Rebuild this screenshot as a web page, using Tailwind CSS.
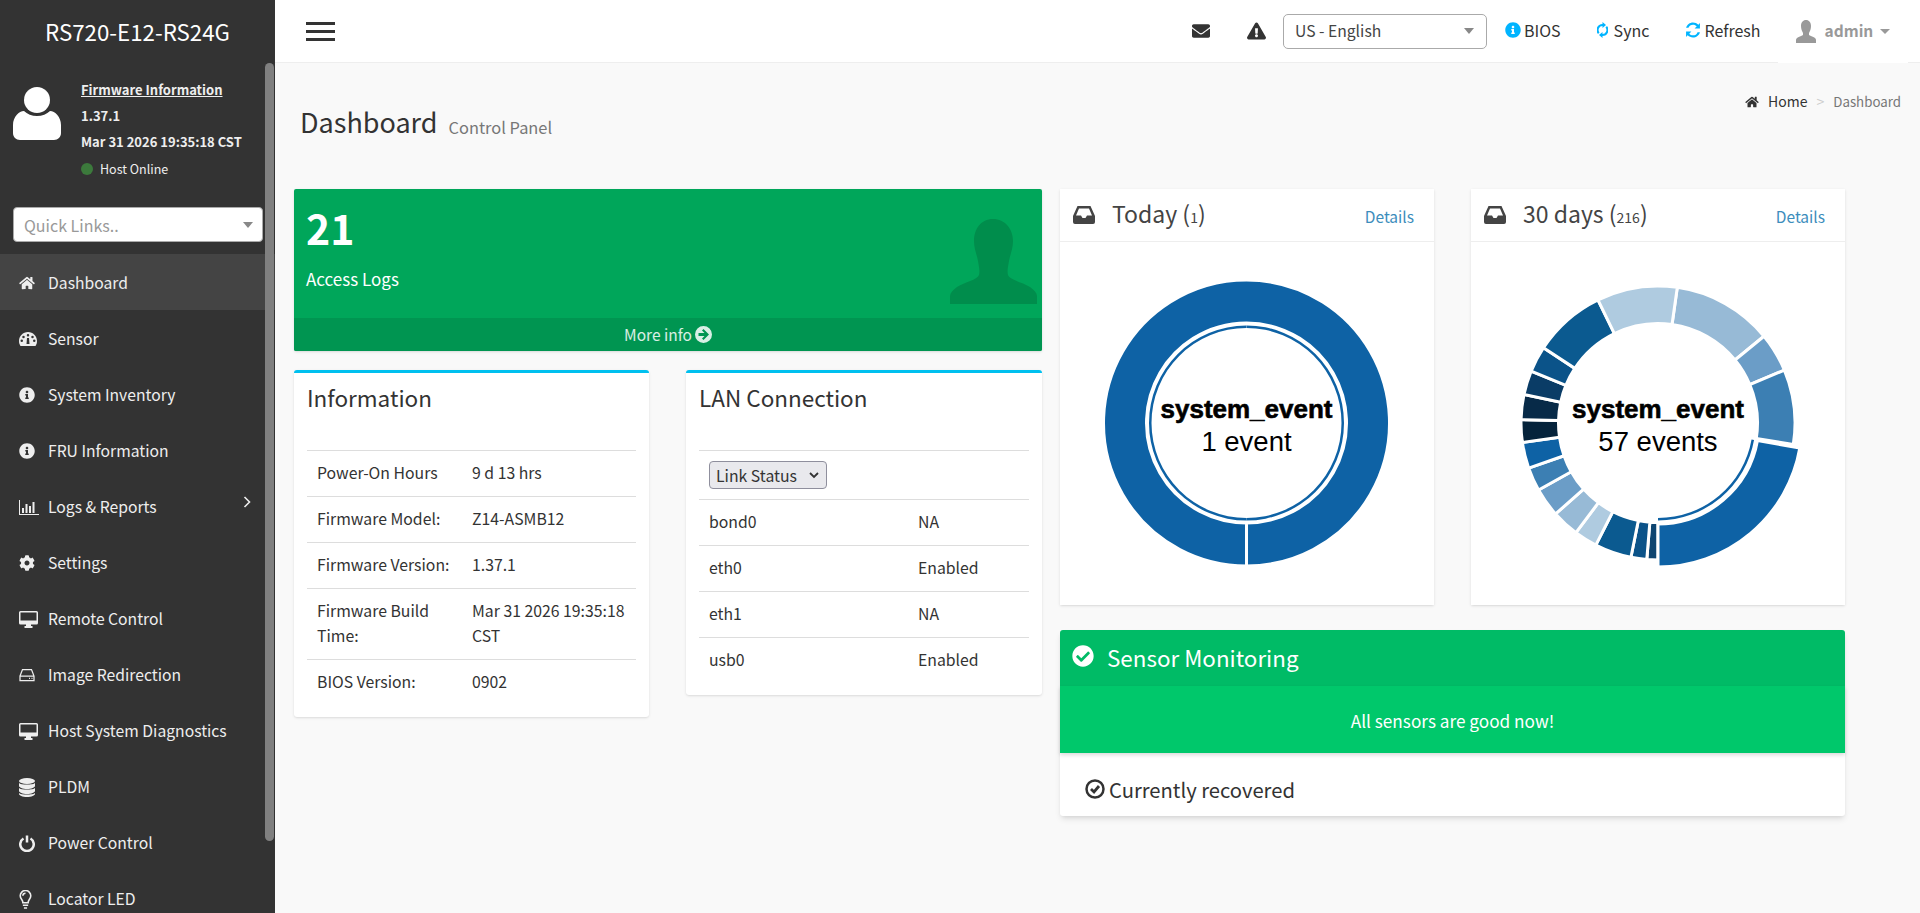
<!DOCTYPE html>
<html lang="en">
<head>
<meta charset="UTF-8">
<title>Dashboard</title>
<script src="https://cdn.jsdelivr.net/npm/@tailwindcss/browser@4"></script>
</head>
<body class="bg-[#f9f9f9] font-['Noto_Sans_CJK_SC','Noto_Sans',sans-serif] text-[#333] overflow-hidden">
<div class="flex h-[913px] w-[1920px] overflow-hidden">

  <!-- sidebar -->
  <aside class="relative w-[275px] shrink-0 bg-[#333] text-[#eee] overflow-hidden">
    <div class="h-[62px] flex items-center justify-center text-[22.300px] leading-[28px] text-white">RS720-E12-RS24G</div>
    <div class="flex h-[145px] pl-[13px] pt-[16px]">
      <svg class="w-[48px] h-[53px] mt-[9px] fill-white" viewBox="0 0 48 53"><circle cx="24" cy="13" r="13"/><path d="M0 38c0-8 6-14 11-14 3 3 8 5 13 5s10-2 13-5c5 0 11 6 11 14v8c0 4-3 7-7 7H7c-4 0-7-3-7-7z"/></svg>
      <div class="ml-[20px] text-[13px] leading-[26px] font-bold -mt-[1px]">
        <a class="underline block">Firmware Information</a>
        <p>1.37.1</p>
        <p>Mar 31 2026 19:35:18 CST</p>
        <p class="flex items-center font-normal text-[12.500px] mt-[1px]"><span class="w-[12px] h-[12px] rounded-full bg-[#3c7a3c] mr-[7px]"></span>Host Online</p>
      </div>
    </div>
    <div class="mx-[13px] w-[250px] h-[35px] bg-white rounded-[4px] border border-[#aaa] flex items-center justify-between pl-[10px] pr-[9px] text-[16px] text-[#999]">
      Quick Links..
      <span class="w-0 h-0 border-x-[5px] border-x-transparent border-t-[6px] border-t-[#888]"></span>
    </div>
    <nav class="mt-[12px] text-[15.700px] [&>a]:pt-[2px]">
      <a class="flex items-center h-[56px] bg-[#444] pl-[19px]"><svg class="w-[16px] h-[14px] fill-[#eee] mr-[13px]" viewBox="0 0 576 512"><path d="M280.37 148.26L96 300.11V464a16 16 0 0 0 16 16l112.06-.29a16 16 0 0 0 15.92-16V368a16 16 0 0 1 16-16h64a16 16 0 0 1 16 16v95.64a16 16 0 0 0 16 16.05L464 480a16 16 0 0 0 16-16V300L295.67 148.26a12.19 12.19 0 0 0-15.3 0zM571.6 251.47L488 182.56V44.05a12 12 0 0 0-12-12h-56a12 12 0 0 0-12 12v72.61L318.47 43a48 48 0 0 0-61 0L4.34 251.47a12 12 0 0 0-1.6 16.9l25.5 31A12 12 0 0 0 45.15 301l235.22-193.74a12.19 12.19 0 0 1 15.3 0L530.9 301a12 12 0 0 0 16.9-1.6l25.5-31a12 12 0 0 0-1.7-16.93z"/></svg>Dashboard</a>
      <a class="flex items-center h-[56px] pl-[19px]"><svg class="w-[18px] h-[14px] fill-[#eee] mr-[11px]" viewBox="0 0 36 28"><path d="M18 0C8 0 0 8 0 18c0 4 1 7 3 10h30c2-3 3-6 3-10C36 8 28 0 18 0zm0 4a2.5 2.5 0 1 1 0 5 2.5 2.5 0 0 1 0-5zM9 7.5a2.5 2.5 0 1 1 0 5 2.5 2.5 0 0 1 0-5zm18 0a2.5 2.5 0 1 1 0 5 2.5 2.5 0 0 1 0-5zM5.500 15a2.500 2.500 0 1 1 0 5 2.500 2.500 0 0 1 0-5zm25 0a2.500 2.500 0 1 1 0 5 2.500 2.500 0 0 1 0-5zM16 12h4l1 12h-6z" fill-rule="evenodd"/></svg>Sensor</a>
      <a class="flex items-center h-[56px] pl-[19px]"><svg class="w-[16px] h-[16px] fill-[#eee] mr-[13px]" viewBox="0 0 512 512"><path d="M256 8C119.043 8 8 119.083 8 256c0 136.997 111.043 248 248 248s248-111.003 248-248C504 119.083 392.957 8 256 8zm0 110c23.196 0 42 18.804 42 42s-18.804 42-42 42-42-18.804-42-42 18.804-42 42-42zm56 254c0 6.627-5.373 12-12 12h-88c-6.627 0-12-5.373-12-12v-24c0-6.627 5.373-12 12-12h12v-64h-12c-6.627 0-12-5.373-12-12v-24c0-6.627 5.373-12 12-12h64c6.627 0 12 5.373 12 12v100h12c6.627 0 12 5.373 12 12v24z"/></svg>System Inventory</a>
      <a class="flex items-center h-[56px] pl-[19px]"><svg class="w-[16px] h-[16px] fill-[#eee] mr-[13px]" viewBox="0 0 512 512"><path d="M256 8C119.043 8 8 119.083 8 256c0 136.997 111.043 248 248 248s248-111.003 248-248C504 119.083 392.957 8 256 8zm0 110c23.196 0 42 18.804 42 42s-18.804 42-42 42-42-18.804-42-42 18.804-42 42-42zm56 254c0 6.627-5.373 12-12 12h-88c-6.627 0-12-5.373-12-12v-24c0-6.627 5.373-12 12-12h12v-64h-12c-6.627 0-12-5.373-12-12v-24c0-6.627 5.373-12 12-12h64c6.627 0 12 5.373 12 12v100h12c6.627 0 12 5.373 12 12v24z"/></svg>FRU Information</a>
      <a class="flex items-center h-[56px] pl-[19px] relative"><svg class="w-[20px] h-[15px] fill-[#eee] mr-[9px]" viewBox="0 0 40 30"><path d="M0 0h2v28h38v2H0zM6 16h4v10H6zM13 8h4v18h-4zM20 12h4v14h-4zM27 4h4v22h-4z"/></svg>Logs &amp; Reports<svg class="absolute right-[24px] top-[18px] w-[8px] h-[12px] stroke-[#eee] fill-none stroke-[1.6]" viewBox="0 0 8 12"><path d="M1.500 1l5 5-5 5"/></svg></a>
      <a class="flex items-center h-[56px] pl-[19px]"><svg class="w-[16px] h-[16px] fill-[#eee] mr-[13px]" viewBox="0 0 512 512"><path d="M487.4 315.7l-42.6-24.6c4.3-23.2 4.3-47 0-70.2l42.6-24.6c4.9-2.8 7.1-8.6 5.5-14-11.1-35.6-30-67.8-54.7-94.6-3.8-4.1-10-5.1-14.8-2.3L380.8 110c-17.9-15.4-38.5-27.3-60.8-35.1V25.8c0-5.6-3.9-10.5-9.4-11.7-36.7-8.2-74.3-7.8-109.2 0-5.5 1.2-9.4 6.1-9.4 11.7V75c-22.2 7.9-42.8 19.8-60.8 35.1L88.7 85.500c-4.9-2.8-11-1.9-14.8 2.3-24.7 26.7-43.6 58.9-54.7 94.6-1.7 5.4.6 11.2 5.5 14L67.3 221c-4.3 23.2-4.3 47 0 70.2l-42.6 24.6c-4.9 2.8-7.1 8.6-5.5 14 11.1 35.6 30 67.8 54.7 94.6 3.8 4.1 10 5.1 14.8 2.3l42.6-24.6c17.9 15.4 38.5 27.3 60.8 35.1v49.2c0 5.6 3.9 10.5 9.4 11.7 36.7 8.2 74.3 7.8 109.2 0 5.5-1.2 9.4-6.1 9.4-11.7v-49.2c22.2-7.9 42.8-19.8 60.8-35.1l42.6 24.6c4.9 2.8 11 1.9 14.8-2.3 24.7-26.7 43.6-58.9 54.7-94.6 1.5-5.5-.7-11.3-5.6-14.1zM256 336c-44.1 0-80-35.9-80-80s35.9-80 80-80 80 35.9 80 80-35.9 80-80 80z"/></svg>Settings</a>
      <a class="flex items-center h-[56px] pl-[19px]"><svg class="w-[19px] h-[17px] fill-[#eee] mr-[10px]" viewBox="0 0 38 34"><path fill-rule="evenodd" d="M3 0h32a3 3 0 0 1 3 3v21a3 3 0 0 1-3 3H24v3h3v4H11v-4h3v-3H3a3 3 0 0 1-3-3V3a3 3 0 0 1 3-3zM3 3v16h32V3z"/></svg>Remote Control</a>
      <a class="flex items-center h-[56px] pl-[19px]"><svg class="w-[16px] h-[14px] stroke-[#eee] fill-none stroke-[2.500] mr-[13px]" viewBox="0 0 32 28"><path d="M2 16L7 3h18l5 13v9H2zM2 16h28"/><path d="M20 20.500h2M25 20.500h2"/></svg>Image Redirection</a>
      <a class="flex items-center h-[56px] pl-[19px]"><svg class="w-[19px] h-[17px] fill-[#eee] mr-[10px]" viewBox="0 0 38 34"><path fill-rule="evenodd" d="M3 0h32a3 3 0 0 1 3 3v21a3 3 0 0 1-3 3H24v3h3v4H11v-4h3v-3H3a3 3 0 0 1-3-3V3a3 3 0 0 1 3-3zM3 3v16h32V3z"/></svg>Host System Diagnostics</a>
      <a class="flex items-center h-[56px] pl-[19px]"><svg class="w-[16px] h-[19px] fill-[#eee] mr-[13px]" viewBox="0 0 32 38"><ellipse cx="16" cy="6" rx="16" ry="6"/><path d="M0 10c3 4 29 4 32 0v6c0 3-7 6-16 6S0 19 0 16zM0 20c3 4 29 4 32 0v6c0 3-7 6-16 6S0 29 0 26zM0 30c3 4 29 4 32 0v2c0 3-7 6-16 6S0 35 0 32z"/></svg>PLDM</a>
      <a class="flex items-center h-[56px] pl-[19px]"><svg class="w-[16px] h-[17px] stroke-[#eee] fill-none stroke-[5] mr-[13px]" viewBox="0 0 32 34"><path d="M9 7a13.500 13.500 0 1 0 14 0"/><path d="M16 1v14"/></svg>Power Control</a>
      <a class="flex items-center h-[56px] pl-[19px]"><svg class="w-[13px] h-[19px] stroke-[#eee] fill-none stroke-[3] mr-[16px]" viewBox="0 0 24 36"><path d="M7 24c0-6-5-7-5-13a10 10 0 0 1 20 0c0 6-5 7-5 13z"/><path d="M7 29h10M9 34h6M12 6a5 5 0 0 0-5 5"/></svg>Locator LED</a>
    </nav>
    <div class="absolute right-[1px] top-[63px] w-[9px] h-[778px] rounded-[5px] bg-[#808080]"></div>
  </aside>

  <div class="flex-1 min-w-0">
    <!-- top bar -->
    <header class="relative h-[63px] bg-white border-b border-[#eee] flex items-center pl-[31px] text-[16px]">
      <div class="w-[29px] flex flex-col gap-[5px]"><span class="h-[3px] bg-[#333]"></span><span class="h-[3px] bg-[#333]"></span><span class="h-[3px] bg-[#333]"></span></div>
      <svg class="ml-[857px] w-[18px] h-[18px] fill-[#333]" viewBox="0 0 512 512"><path d="M502.3 190.8c3.9-3.1 9.7-.2 9.7 4.7V400c0 26.5-21.5 48-48 48H48c-26.5 0-48-21.5-48-48V195.600c0-5 5.700-7.800 9.700-4.700 22.400 17.400 52.100 39.500 154.100 113.600 21.100 15.400 56.700 47.800 92.200 47.600 35.700.3 72-32.800 92.300-47.600 102-74.100 131.600-96.300 154-113.700zM256 320c23.200.4 56.600-29.200 73.400-41.400 132.700-96.300 142.800-104.700 173.400-128.700 5.800-4.500 9.200-11.500 9.200-18.900v-19c0-26.500-21.500-48-48-48H48C21.500 64 0 85.500 0 112v19c0 7.400 3.400 14.300 9.200 18.900 30.600 23.900 40.700 32.400 173.400 128.700 16.800 12.200 50.200 41.800 73.400 41.400z"/></svg>
      <svg class="ml-[37px] w-[19px] h-[18px] fill-[#333]" viewBox="0 0 576 512"><path d="M569.517 440.013C587.975 472.007 564.806 512 527.94 512H48.054c-36.937 0-59.999-40.055-41.577-71.987L246.423 23.985c18.467-32.009 64.72-31.951 83.154 0l239.94 416.028zM288 354c-25.405 0-46 20.595-46 46s20.595 46 46 46 46-20.595 46-46-20.595-46-46-46zm-43.673-165.346l7.418 136c.347 6.364 5.609 11.346 11.982 11.346h48.546c6.373 0 11.635-4.982 11.982-11.346l7.418-136c.375-6.874-5.098-12.654-11.982-12.654h-63.383c-6.884 0-12.356 5.78-11.981 12.654z"/></svg>
      <div class="ml-[17px] w-[204px] h-[35px] rounded-[5px] border border-[#aaa] flex items-center justify-between pl-[11px] pr-[12px] text-[15.700px] text-[#444]">US - English<span class="w-0 h-0 border-x-[5px] border-x-transparent border-t-[6px] border-t-[#888]"></span></div>
      <svg class="ml-[18px] w-[16px] h-[18px] fill-[#00b4ff] -mt-[2px]" viewBox="0 0 512 512"><path d="M256 8C119.043 8 8 119.083 8 256c0 136.997 111.043 248 248 248s248-111.003 248-248C504 119.083 392.957 8 256 8zm0 110c23.196 0 42 18.804 42 42s-18.804 42-42 42-42-18.804-42-42 18.804-42 42-42zm56 254c0 6.627-5.373 12-12 12h-88c-6.627 0-12-5.373-12-12v-24c0-6.627 5.373-12 12-12h12v-64h-12c-6.627 0-12-5.373-12-12v-24c0-6.627 5.373-12 12-12h64c6.627 0 12 5.373 12 12v100h12c6.627 0 12 5.373 12 12v24z"/></svg>
      <span class="ml-[3px] -mt-[2px]">BIOS</span>
      <svg class="ml-[36px] w-[11px] h-[16px] fill-[#00b4ff] -mt-[2px]" viewBox="0 0 22 32"><path d="M11 4V0l7 6-7 6V8a8 8 0 0 0-6 13l-3 3A12 12 0 0 1 11 4zM11 28v4l-7-6 7-6v4a8 8 0 0 0 6-13l3-3a12 12 0 0 1-9 20z"/></svg>
      <span class="ml-[6px] -mt-[2px]">Sync</span>
      <svg class="ml-[36px] w-[16px] h-[16px] fill-[#00b4ff] -mt-[2px]" viewBox="0 0 30 30"><path d="M15 1c4 0 7 1.500 10 4l3-3v10H18l4-4c-2-2-4-3-7-3-4 0-7 2-8.500 6H2C3.500 5 9 1 15 1zM2 18h10l-4 4c2 2 4 3 7 3 4 0 7-2 8.500-6H28c-1.500 6-7 10-13 10-4 0-7-1.500-10-4l-3 3z"/></svg>
      <span class="ml-[3px] -mt-[2px]">Refresh</span>
      <svg class="ml-[35px] w-[20px] h-[23px] fill-[#999]" viewBox="0 0 20 23"><path d="M10 0c3 0 5 2.500 5 6 0 3-1 5-2 7v2c2 1.500 7 2 7 5v3H0v-3c0-3 5-3.500 7-5v-2c-1-2-2-4-2-7 0-3.500 2-6 5-6z"/></svg>
      <span class="ml-[9px] font-bold text-[#999] text-[15.500px]">admin</span>
      <span class="ml-[7px] w-0 h-0 border-x-[5px] border-x-transparent border-t-[5px] border-t-[#999]"></span>
      <span class="absolute left-[1503px] -bottom-[1px] w-[130px] h-[1px] bg-white"></span>
    </header>

    <!-- page title -->
    <div class="h-[126px] flex justify-between pl-[25px] pr-[19px]">
      <div class="pt-[39px] flex items-baseline h-fit"><h1 class="text-[27px] leading-[40px]">Dashboard</h1><small class="ml-[11px] text-[16.400px] text-[#777] translate-y-[1px]">Control Panel</small></div>
      <div class="pt-[28px] flex items-center h-fit text-[14px]"><svg class="w-[14px] h-[12px] fill-[#333] mr-[9px]" viewBox="0 0 576 512"><path d="M280.37 148.26L96 300.11V464a16 16 0 0 0 16 16l112.06-.29a16 16 0 0 0 15.92-16V368a16 16 0 0 1 16-16h64a16 16 0 0 1 16 16v95.64a16 16 0 0 0 16 16.05L464 480a16 16 0 0 0 16-16V300L295.67 148.26a12.19 12.19 0 0 0-15.3 0zM571.6 251.47L488 182.56V44.05a12 12 0 0 0-12-12h-56a12 12 0 0 0-12 12v72.61L318.47 43a48 48 0 0 0-61 0L4.34 251.47a12 12 0 0 0-1.6 16.9l25.5 31A12 12 0 0 0 45.15 301l235.22-193.74a12.19 12.19 0 0 1 15.3 0L530.9 301a12 12 0 0 0 16.9-1.6l25.5-31a12 12 0 0 0-1.7-16.93z"/></svg>Home<span class="mx-[9px] text-[#ccc]">&gt;</span><span class="text-[#777] text-[13.300px]">Dashboard</span></div>
    </div>

    <div class="flex pl-[19px] items-start">
      <!-- left column -->
      <div class="w-[748px]">
        <div class="h-[162px] bg-[#00a65a] rounded-[2px] text-white relative flex flex-col shadow-sm">
          <div class="flex-1 pl-[12px] pt-[13px]">
            <p class="text-[41px] leading-[50px] font-bold">21</p>
            <p class="text-[17px] leading-[24px] mt-[15px]">Access Logs</p>
          </div>
          <svg class="absolute right-[5px] top-[30px] w-[87px] h-[85px] fill-[#008d4c]" viewBox="0 0 87 85"><path d="M43 0c12 0 20 10 20 22 0 8-3 14-4 20-1 6-2 10-1 14 2 5 14 7 22 12 4 3 7 6 7 9v8H0v-8c0-3 3-6 7-9 8-5 20-7 22-12 1-4 0-8-1-14-1-6-4-12-4-20C24 10 31 0 43 0z"/></svg>
          <div class="h-[33px] bg-[#009551] flex items-center justify-center text-[15.500px] text-white/85 rounded-b-[2px]">More info<svg class="ml-[3px] w-[17px] h-[17px] fill-white/85" viewBox="0 0 34 34"><path fill-rule="evenodd" d="M17 0a17 17 0 1 1 0 34 17 17 0 0 1 0-34zM17 6l-3 3 5 5H7v6h12l-5 5 3 3 11-11z"/></svg></div>
        </div>
        <div class="flex justify-between mt-[19px] items-start">
          <section class="w-[355px] h-[347px] bg-white rounded-[3px] border-t-[3px] border-[#00c0ef] shadow-sm px-[13px]">
            <h3 class="text-[22.500px] leading-[34px] h-[77px] pt-[7px]">Information</h3>
            <div class="text-[15.800px] leading-[25px]">
              <div class="grid grid-cols-[155px_1fr] items-center h-[46px] border-t border-[#ddd] pl-[10px] pb-[2px]"><span>Power-On Hours</span><span>9 d 13 hrs</span></div>
              <div class="grid grid-cols-[155px_1fr] items-center h-[46px] border-t border-[#ddd] pl-[10px] pb-[2px]"><span>Firmware Model:</span><span>Z14-ASMB12</span></div>
              <div class="grid grid-cols-[155px_1fr] items-center h-[46px] border-t border-[#ddd] pl-[10px] pb-[2px]"><span>Firmware Version:</span><span>1.37.1</span></div>
              <div class="grid grid-cols-[155px_1fr] items-center h-[71px] border-t border-[#ddd] pl-[10px] pb-[2px]"><span>Firmware Build Time:</span><span>Mar 31 2026 19:35:18 CST</span></div>
              <div class="grid grid-cols-[155px_1fr] items-center h-[46px] border-t border-[#ddd] pl-[10px] pb-[2px]"><span>BIOS Version:</span><span>0902</span></div>
            </div>
          </section>
          <section class="w-[356px] h-[325px] bg-white rounded-[3px] border-t-[3px] border-[#00c0ef] shadow-sm px-[13px]">
            <h3 class="text-[22.500px] leading-[34px] h-[77px] pt-[7px]">LAN Connection</h3>
            <div class="text-[15.800px] leading-[25px]">
              <div class="h-[49px] border-t border-[#ddd] px-[10px] flex items-center"><div class="w-[118px] h-[28px] rounded-[4px] border border-[#8f8f9d] bg-[#e9e9ed] flex items-center justify-between pl-[6px] pr-[7px]">Link Status<svg class="w-[10px] h-[7px] stroke-[#333] fill-none stroke-[1.800]" viewBox="0 0 10 7"><path d="M1 1l4 4 4-4"/></svg></div></div>
              <div class="grid grid-cols-[209px_1fr] items-center h-[46px] border-t border-[#ddd] px-[10px] pb-[2px]"><span>bond0</span><span>NA</span></div>
              <div class="grid grid-cols-[209px_1fr] items-center h-[46px] border-t border-[#ddd] px-[10px] pb-[2px]"><span>eth0</span><span>Enabled</span></div>
              <div class="grid grid-cols-[209px_1fr] items-center h-[46px] border-t border-[#ddd] px-[10px] pb-[2px]"><span>eth1</span><span>NA</span></div>
              <div class="grid grid-cols-[209px_1fr] items-center h-[46px] border-t border-[#ddd] px-[10px] pb-[2px]"><span>usb0</span><span>Enabled</span></div>
            </div>
          </section>
        </div>
      </div>

      <!-- right column -->
      <div class="w-[785px] ml-[18px]">
        <div class="flex justify-between">
          <section class="w-[374px] h-[416px] bg-white shadow-sm">
            <div class="h-[53px] border-b border-[#eee] flex items-center pl-[13px] pr-[20px]">
              <svg class="w-[22px] h-[18px] fill-[#444] mr-[17px]" viewBox="0 0 44 36"><path fill-rule="evenodd" d="M9 0h26l9 20v12a4 4 0 0 1-4 4H4a4 4 0 0 1-4-4V20zM12 5L6 19h10l3 5h6l3-5h10L32 5z"/></svg>
              <span class="text-[23px] text-[#444] -mt-[3px]">Today (<span class="text-[14px]">1</span>)</span>
              <a class="ml-auto text-[15.500px] text-[#3c8dbc] mt-[4px]">Details</a>
            </div>
            <svg id="chart-today" width="374" height="362"></svg>
          </section>
          <section class="w-[374px] h-[416px] bg-white shadow-sm">
            <div class="h-[53px] border-b border-[#eee] flex items-center pl-[13px] pr-[20px]">
              <svg class="w-[22px] h-[18px] fill-[#444] mr-[17px]" viewBox="0 0 44 36"><path fill-rule="evenodd" d="M9 0h26l9 20v12a4 4 0 0 1-4 4H4a4 4 0 0 1-4-4V20zM12 5L6 19h10l3 5h6l3-5h10L32 5z"/></svg>
              <span class="text-[23px] text-[#444] -mt-[3px]">30 days (<span class="text-[14px]">216</span>)</span>
              <a class="ml-auto text-[15.500px] text-[#3c8dbc] mt-[4px]">Details</a>
            </div>
            <svg id="chart-month" width="374" height="362"></svg>
          </section>
        </div>
        <section class="mt-[25px] rounded-[3px] shadow-md bg-white">
          <div class="h-[56px] bg-[#00bb66] rounded-t-[3px] flex items-center pl-[12px] text-white text-[22.400px]">
            <svg class="w-[22px] h-[22px] fill-white mr-[13px] -mt-[4px]" viewBox="0 0 512 512"><path d="M504 256c0 136.967-111.033 248-248 248S8 392.967 8 256 119.033 8 256 8s248 111.033 248 248zM227.314 387.314l184-184c6.248-6.248 6.248-16.379 0-22.627l-22.627-22.627c-6.248-6.249-16.379-6.249-22.628 0L216 308.118l-70.059-70.059c-6.248-6.248-16.379-6.248-22.628 0l-22.627 22.627c-6.248 6.248-6.248 16.379 0 22.627l104 104c6.249 6.249 16.379 6.249 22.628.001z"/></svg>Sensor Monitoring
          </div>
          <div class="h-[67px] bg-[#00c86b] flex items-center justify-center text-white text-[17.200px] pt-[2px] shadow-[0_2px_4px_rgba(0,0,0,0.15)] relative">All sensors are good now!</div>
          <div class="h-[63px] flex items-center pl-[25px] text-[20.200px] pt-[12px]">
            <svg class="w-[20px] h-[20px] mr-[4px] -mt-[4px]" viewBox="0 0 20 20"><circle cx="10" cy="10" r="8.500" fill="none" stroke="#333" stroke-width="2.500"/><path d="M6 10l3 3 5-6" fill="none" stroke="#333" stroke-width="2.800"/></svg>Currently recovered
          </div>
        </section>
      </div>
    </div>
  </div>
</div>

<script>
// angles are clockwise from twelve o'clock, in degrees
function polar(cx, cy, r, deg) {
  const a = (deg - 90) * Math.PI / 180;
  return [cx + r * Math.cos(a), cy + r * Math.sin(a)];
}

function arcPath(cx, cy, r0, r1, a0, a1) {
  const big = a1 - a0 > 180 ? 1 : 0;
  const p = [polar(cx, cy, r1, a0), polar(cx, cy, r1, a1), polar(cx, cy, r0, a1), polar(cx, cy, r0, a0)];
  return `M${p[0]}A${r1} ${r1} 0 ${big} 1 ${p[1]}L${p[2]}A${r0} ${r0} 0 ${big} 0 ${p[3]}Z`;
}

function drawDonut(id, cx, cy, slices, label) {
  const svg = document.getElementById(id);
  const ns = 'http://www.w3.org/2000/svg';
  const add = (tag, attrs) => {
    const el = document.createElementNS(ns, tag);
    Object.keys(attrs).forEach(k => el.setAttribute(k, attrs[k]));
    svg.appendChild(el);
    return el;
  };
  slices.forEach(s => {
    add('path', { d: arcPath(cx, cy, s.r0, s.r1, s.from, s.to), fill: s.color, stroke: s.thin ? 'none' : '#fff', 'stroke-width': 3 });
  });
  const t1 = add('text', { x: cx, y: cy - 5, 'text-anchor': 'middle', 'font-family': 'Liberation Sans', 'font-weight': 'bold', 'font-size': 26, stroke: '#000', 'stroke-width': 0.6 });
  t1.textContent = 'system_event';
  const t2 = add('text', { x: cx, y: cy + 28, 'text-anchor': 'middle', 'font-family': 'Liberation Sans', 'font-size': 27.5 });
  t2.textContent = label;
}

drawDonut('chart-today', 186.5, 181, [
  { from: 180, to: 539.99, r0: 100, r1: 143, color: '#0e62a5' },
  { from: 180, to: 359.9, r0: 95, r1: 97.500, color: '#0e62a5', thin: true },
  { from: 0, to: 180, r0: 95, r1: 97.500, color: '#0e62a5', thin: true }
], '1 event');

const month = [
  [8.1, 50.7, '#97bad6'], [50.7, 67.3, '#6b9dc7'], [67.3, 99, '#3c7fb3'],
  [180, 184.7, '#0e4570'], [184.7, 191.4, '#0b5389'], [191.4, 207, '#0b5a90'],
  [207, 216.8, '#afcbe0'], [216.8, 228.4, '#97bad6'], [228.4, 240.7, '#6b9dc7'],
  [240.7, 250.8, '#3c7fb3'], [250.8, 261.8, '#0e62a5'], [261.800, 271.4, '#05233b'],
  [271.4, 282, '#072a48'], [282, 292.2, '#0a3c66'], [292.2, 303.3, '#0b5389'],
  [303.3, 334, '#0b5a90'], [334, 368.1, '#afcbe0']
].map(m => ({ from: m[0], to: m[1], color: m[2], r0: 99.500, r1: 137 }));
month.push({ from: 100, to: 180, r0: 101, r1: 144, color: '#0e62a5' });
month.push({ from: 100, to: 180, r0: 95, r1: 97.500, color: '#0e62a5', thin: true });
drawDonut('chart-month', 187, 181, month, '57 events');
</script>
</body>
</html>
